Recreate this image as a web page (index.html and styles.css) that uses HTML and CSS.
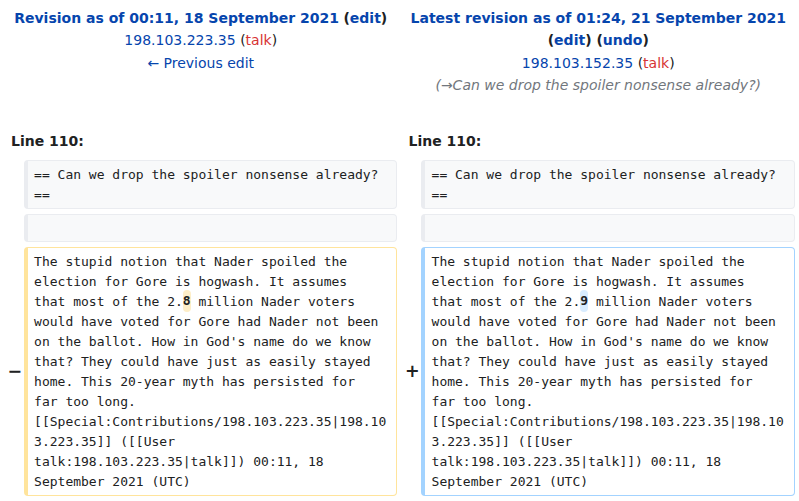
FILE: index.html
```html
<!DOCTYPE html>
<html>
<head>
<meta charset="utf-8">
<link rel="stylesheet" href="styles.css">
</head>
<body>
<table class="diff">
  <colgroup>
    <col class="col-marker"><col class="col-content"><col class="col-marker"><col class="col-content">
  </colgroup>
  <tr class="title-row">
    <td class="title" colspan="2">
      <div><a class="strong" href="#">Revision as of 00:11, 18 September 2021</a> <span class="strong dark">(<a class="strong" href="#">edit</a>)</span></div>
      <div><a href="#">198.103.223.35</a> <span class="dark">(<a class="new" href="#">talk</a>)</span></div>
      <div><a href="#">← Previous edit</a></div>
    </td>
    <td class="title" colspan="2">
      <div><a class="strong" href="#">Latest revision as of 01:24, 21 September 2021</a> <span class="strong dark">(<a class="strong" href="#">edit</a>) (<a class="strong" href="#">undo</a>)</span></div>
      <div><a href="#">198.103.152.35</a> <span class="dark">(<a class="new" href="#">talk</a>)</span></div>
      <div class="comment">(→Can we drop the spoiler nonsense already?)</div>
    </td>
  </tr>
  <tr>
    <td class="lineno" colspan="2">Line 110:</td>
    <td class="lineno" colspan="2">Line 110:</td>
  </tr>
  <tr>
    <td class="marker"></td>
    <td class="content context"><div>== Can we drop the spoiler nonsense already? ==</div></td>
    <td class="marker"></td>
    <td class="content context"><div>== Can we drop the spoiler nonsense already? ==</div></td>
  </tr>
  <tr>
    <td class="marker"></td>
    <td class="content context"><br></td>
    <td class="marker"></td>
    <td class="content context"><br></td>
  </tr>
  <tr>
    <td class="marker">−</td>
    <td class="content deleted"><div>The stupid notion that Nader spoiled the election for Gore is hogwash. It assumes that most of the 2.<del class="change">8</del> million Nader voters would have voted for Gore had Nader not been on the ballot. How in God's name do we know that? They could have just as easily stayed home. This 20-year myth has persisted for far too long. [[Special:Contributions/198.103.223.35|198.103.223.35]] ([[User talk:198.103.223.35|talk]]) 00:11, 18 September 2021 (UTC)</div></td>
    <td class="marker">+</td>
    <td class="content added"><div>The stupid notion that Nader spoiled the election for Gore is hogwash. It assumes that most of the 2.<ins class="change">9</ins> million Nader voters would have voted for Gore had Nader not been on the ballot. How in God's name do we know that? They could have just as easily stayed home. This 20-year myth has persisted for far too long. [[Special:Contributions/198.103.223.35|198.103.223.35]] ([[User talk:198.103.223.35|talk]]) 00:11, 18 September 2021 (UTC)</div></td>
  </tr>
</table>
</body>
</html>
```
FILE: styles.css
```css
html, body {
  margin: 0;
  padding: 0;
  background: #ffffff;
}
body {
  font-family: "DejaVu Sans", sans-serif;
  font-size: 14px;
  line-height: 1.6;
  color: #202122;
}
a {
  color: #0645ad;
  text-decoration: none;
}
a.new {
  color: #d73333;
}
.strong {
  font-weight: bold;
}
.dark {
  color: #202122;
}
table.diff {
  width: 100%;
  table-layout: fixed;
  border-spacing: 4px 5px;
  border-collapse: separate;
}
.col-marker {
  width: 2%;
}
.col-content {
  width: 48%;
}
td {
  padding: 0;
  vertical-align: top;
}
td.title {
  text-align: center;
  line-height: 22.6px;
  padding: 1.5px 0 0 0;
}
.comment {
  font-style: italic;
  color: #72777d;
}
td.lineno {
  font-weight: bold;
  padding: 28px 0 3px 7px;
}
td.marker {
  text-align: left;
  padding-left: 3.5px;
  vertical-align: middle;
  font-weight: bold;
  font-size: 17.5px;
  line-height: 1.2;
  white-space: nowrap;
}
td.content {
  font-family: "DejaVu Sans Mono", monospace;
  font-size: 13px;
  line-height: 20px;
  padding: 3.25px 6.5px;
  border: 1px solid #eaecf0;
  border-left-width: 4px;
  border-radius: 4px;
  overflow-wrap: break-word;
  word-wrap: break-word;
  white-space: break-spaces;
}
td.context {
  background: #f8f9fa;
  color: #202122;
}
td.deleted {
  border-color: #ffe49c;
  background: #ffffff;
}
td.added {
  border-color: #a3d3ff;
  background: #ffffff;
}
.change {
  text-decoration: none;
  font-weight: bold;
  border-radius: 4px;
  padding: 3.25px 0;
}
del.change {
  background: #feeec8;
}
ins.change {
  background: #d8ecff;
}
```
